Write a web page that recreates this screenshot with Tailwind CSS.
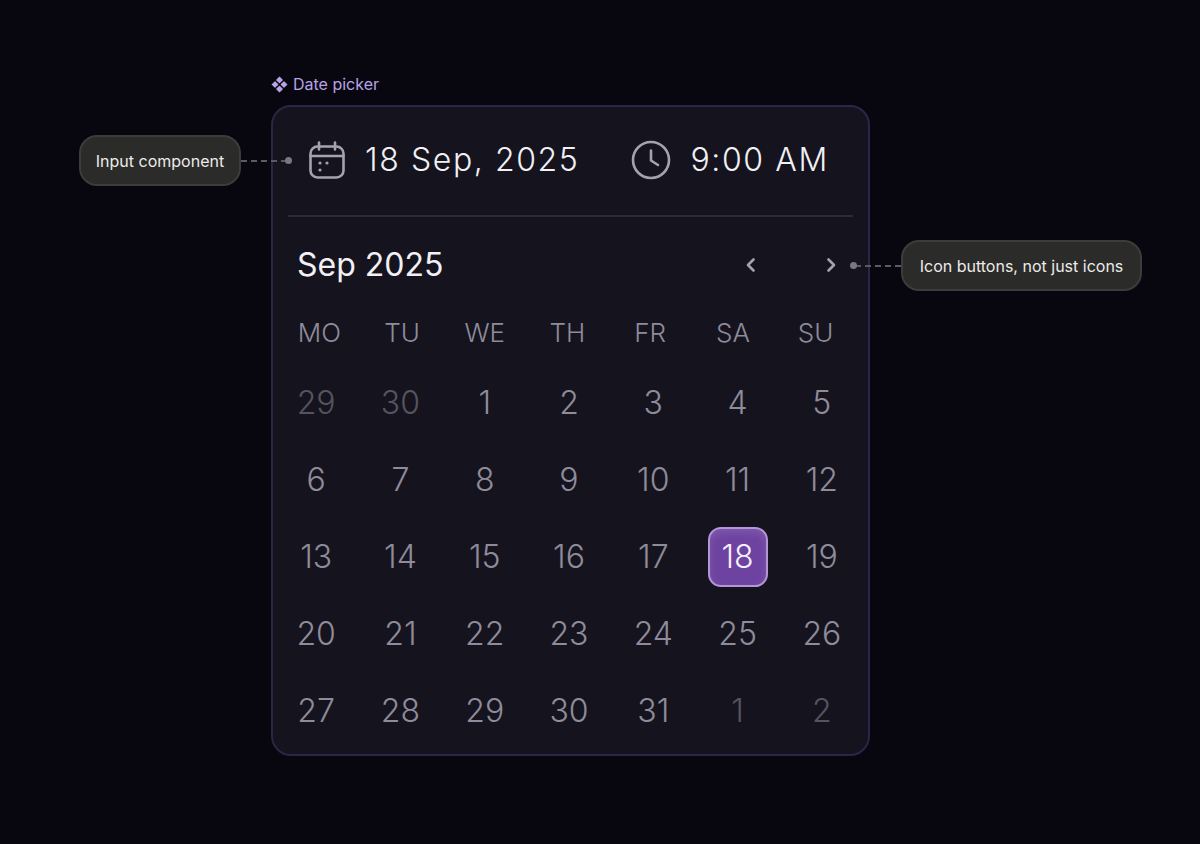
<!doctype html>
<html>
<head>
<meta charset="utf-8">
<script src="https://cdn.jsdelivr.net/npm/@tailwindcss/browser@4"></script>
</head>
<body class="bg-[#08070f]">
<div class="relative h-[844px] w-[1200px] overflow-hidden bg-[#08070f] font-['Inter',sans-serif]">
  <div class="ml-[271px] w-[599px] pt-[73px]">
    <div class="flex h-[22px] items-center gap-[5px] text-[16px] leading-[22px] text-[#b9a2e6]">
      <svg class="h-[17px] w-[17px]" viewBox="0 0 17 17" fill="#b9a2e6"><path d="M8.5 0.5 L11.6 3.6 Q12 4 11.6 4.4 L8.9 7.1 Q8.5 7.5 8.1 7.1 L5.4 4.4 Q5 4 5.4 3.6 Z"/><path d="M8.5 16.5 L5.4 13.4 Q5 13 5.4 12.6 L8.1 9.9 Q8.5 9.5 8.9 9.9 L11.6 12.6 Q12 13 11.6 13.4 Z"/><path d="M0.5 8.5 L3.6 5.4 Q4 5 4.4 5.4 L7.1 8.1 Q7.5 8.5 7.1 8.9 L4.4 11.6 Q4 12 3.6 11.6 Z"/><path d="M16.5 8.5 L13.4 11.6 Q13 12 12.6 11.6 L9.9 8.9 Q9.5 8.5 9.9 8.1 L12.6 5.4 Q13 5 13.4 5.4 Z"/></svg>
      <span>Date picker</span>
    </div>
    <div class="mt-[10px] h-[651px] rounded-[20px] border-2 border-[#2b2647] bg-[#15141e] px-[15px]">
      <div class="flex h-[110px] items-center border-b-2 border-[#2c2a3a] pb-[2px] pl-[20px] text-[#f1f0f4]">
        <svg class="h-[38px] w-[38px] text-[#a5a2ae]" viewBox="0 0 38 38" fill="none" stroke="currentColor" stroke-width="2.6" stroke-linecap="round" stroke-linejoin="round"><rect x="2.5" y="5.5" width="33" height="31" rx="7"/><path d="M2.5 15h33M11 1.5v7M27 1.5v7"/><circle cx="12" cy="22" r="1.6" fill="currentColor" stroke="none"/><circle cx="19" cy="22" r="1.6" fill="currentColor" stroke="none"/><circle cx="12" cy="29" r="1.6" fill="currentColor" stroke="none"/></svg>
        <span class="ml-[19px] text-[32px] leading-[38px] font-light tracking-[1.6px]">18 Sep, 2025</span>
        <svg class="ml-[52px] h-[40px] w-[40px] text-[#a5a2ae]" viewBox="0 0 40 40" fill="none" stroke="currentColor" stroke-width="2.6" stroke-linecap="round" stroke-linejoin="round"><circle cx="20" cy="20" r="18"/><path d="M20 10.5v10l7 4.5"/></svg>
        <span class="ml-[19px] text-[32px] leading-[38px] font-light tracking-[1.6px]">9:00 AM</span>
      </div>
      <div class="flex h-[96px] items-center justify-between">
        <span class="ml-[9px] text-[32px] leading-[40px] text-[#f1f0f4]">Sep 2025</span>
        <div class="mr-[13px] flex items-center gap-[62px] text-[#a5a2ae]">
          <svg class="h-[18px] w-[18px]" viewBox="0 0 18 18" fill="none" stroke="currentColor" stroke-width="2.6" stroke-linecap="round" stroke-linejoin="round"><path d="M11.5 3.5L6 9l5.5 5.5"/></svg>
          <svg class="h-[18px] w-[18px]" viewBox="0 0 18 18" fill="none" stroke="currentColor" stroke-width="2.6" stroke-linecap="round" stroke-linejoin="round"><path d="M6.5 3.5L12 9l-5.5 5.5"/></svg>
        </div>
      </div>
      <div class="ml-[-10px] grid w-[579px] grid-cols-7 text-center text-[26px] leading-[40px] font-light text-[#8f8b9b]">
        <span>MO</span><span>TU</span><span>WE</span><span>TH</span><span>FR</span><span>SA</span><span>SU</span>
      </div>
      <div class="ml-[-14px] mt-[11px] grid w-[590px] grid-cols-7 auto-rows-[77px] items-center justify-items-center text-[32px] font-light text-[#8f8b9b]">
        <span class="text-[#56535f]">29</span><span class="text-[#56535f]">30</span><span>1</span><span>2</span><span>3</span><span>4</span><span>5</span>
        <span>6</span><span>7</span><span>8</span><span>9</span><span>10</span><span>11</span><span>12</span>
        <span>13</span><span>14</span><span>15</span><span>16</span><span>17</span>
        <span class="flex h-[60px] w-[60px] items-center justify-center rounded-[13px] border-2 border-[#b395d8] bg-[#6e42a0] text-[#f4f0fa] shadow-[inset_0_4px_8px_rgba(255,255,255,0.12)]">18</span>
        <span>19</span>
        <span>20</span><span>21</span><span>22</span><span>23</span><span>24</span><span>25</span><span>26</span>
        <span>27</span><span>28</span><span>29</span><span>30</span><span>31</span><span class="text-[#56535f]">1</span><span class="text-[#56535f]">2</span>
      </div>
    </div>
  </div>

  <div class="absolute left-[79px] top-[135px] flex h-[51px] w-[162px] items-center justify-center rounded-[18px] border-2 border-[#3c3c3a] bg-[#2b2b29] text-[16px] text-[#ecebe9]">Input component</div>
  <div class="absolute left-[241px] top-[160px] w-[46px] border-t-2 border-dashed border-[#5c5a62]"></div>
  <div class="absolute left-[285px] top-[157px] h-[7px] w-[7px] rounded-full bg-[#7a7782]"></div>

  <div class="absolute left-[901px] top-[240px] flex h-[51px] w-[241px] items-center justify-center rounded-[18px] border-2 border-[#3c3c3a] bg-[#2b2b29] text-[16px] text-[#ecebe9]">Icon buttons, not just icons</div>
  <div class="absolute left-[855px] top-[265px] w-[46px] border-t-2 border-dashed border-[#5c5a62]"></div>
  <div class="absolute left-[850px] top-[262px] h-[7px] w-[7px] rounded-full bg-[#7a7782]"></div>
</div>
</body>
</html>
